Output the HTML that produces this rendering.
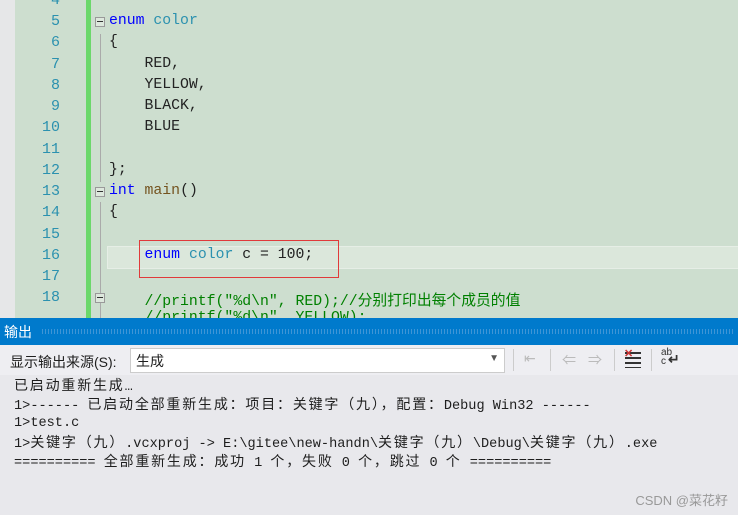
<!DOCTYPE html>
<html><head><meta charset="utf-8"><style>
body{margin:0;width:738px;height:515px;overflow:hidden;position:relative;background:#e8e8ec;font-family:"Liberation Mono","Noto Sans CJK SC",monospace}
.ed{position:absolute;left:0;top:0;width:738px;height:318px;background:#cddecf}
.gut{position:absolute;left:0;top:0;width:15px;height:318px;background:#e6e7e8}
.ln{position:absolute;left:20px;width:40px;text-align:right;color:#2b91af;font-size:15px}
.code{position:absolute;left:109px;font-size:14.8px;color:#222;white-space:pre}
.g{position:absolute;left:86px;top:0;width:5px;height:318px;background:#6bd86b}
.kw{color:#0000ff}.ty{color:#2b91af}.fn{color:#74531f}.cm{color:#008000}
.fold{position:absolute;left:95px;width:8px;height:8px;border:1px solid #999;background:#dde8dd}
.fold:after{content:"";position:absolute;left:1px;top:3px;width:6px;height:1px;background:#333}
.vl{position:absolute;left:100px;width:1px;background:#aaa}
.title{position:absolute;left:0;top:318px;width:738px;height:27px;background:#007acc;color:#fff;font-family:"Liberation Sans","Noto Sans CJK SC",sans-serif;font-size:14px}
.tb{position:absolute;left:0;top:345px;width:738px;height:30px;background:#eeeef2;font-family:"Liberation Sans","Noto Sans CJK SC",sans-serif;font-size:14px;color:#1e1e1e}
.out{position:absolute;left:14px;font-size:13.6px;line-height:19px;height:19px;color:#1e1e1e;white-space:pre}
.c{font-family:"Noto Sans CJK SC",sans-serif;font-size:14px;letter-spacing:1.8px}
</style></head><body>
<div class="ed">
<div class="gut"></div>
<div class="g"></div>
<div style="position:absolute;left:107px;top:246px;width:631px;height:21px;background:#dbe7db;border:1px solid #e6eee6"></div>
<div style="position:absolute;left:139px;top:240px;width:198px;height:36px;border:1px solid #e03a3a"></div>
<div class="vl" style="top:34px;height:148px"></div>
<div class="vl" style="top:202px;height:116px"></div>
<div class="fold" style="top:17px"></div>
<div class="fold" style="top:187px"></div>
<div class="fold" style="top:293px"></div>
<div class="ln" style="top:-8px">4</div>
<div class="ln" style="top:13px">5</div><div class="code" style="top:13px"><span class="kw">enum</span> <span class="ty">color</span></div>
<div class="ln" style="top:34px">6</div><div class="code" style="top:34px">{</div>
<div class="ln" style="top:56px">7</div><div class="code" style="top:56px">    RED,</div>
<div class="ln" style="top:77px">8</div><div class="code" style="top:77px">    YELLOW,</div>
<div class="ln" style="top:98px">9</div><div class="code" style="top:98px">    BLACK,</div>
<div class="ln" style="top:119px">10</div><div class="code" style="top:119px">    BLUE</div>
<div class="ln" style="top:141px">11</div>
<div class="ln" style="top:162px">12</div><div class="code" style="top:162px">};</div>
<div class="ln" style="top:183px">13</div><div class="code" style="top:183px"><span class="kw">int</span> <span class="fn">main</span>()</div>
<div class="ln" style="top:204px">14</div><div class="code" style="top:204px">{</div>
<div class="ln" style="top:226px">15</div>
<div class="ln" style="top:247px">16</div><div class="code" style="top:247px">    <span class="kw">enum</span> <span class="ty">color</span> c = 100;</div>
<div class="ln" style="top:268px">17</div>
<div class="ln" style="top:289px">18</div><div class="code cm" style="top:289px">    //printf("%d\n", RED);//分别打印出每个成员的值</div>
<div class="code cm" style="top:310px">    //printf("%d\n", YELLOW);</div>
</div>
<div class="title"><span style="position:absolute;left:4px;top:4px">输出</span>
<div style="position:absolute;left:42px;top:11px;width:692px;height:5px;background:repeating-linear-gradient(90deg,#3f95d6 0 1px,transparent 1px 3px)"></div></div>
<div class="tb">
<span style="position:absolute;left:10px;top:7px">显示输出来源(S):</span>
<div style="position:absolute;left:130px;top:3px;width:373px;height:23px;background:#fff;border:1px solid #ccc"><span style="position:absolute;left:5px;top:2px">生成</span><span style="position:absolute;right:5px;top:4px;font-size:10px;color:#555">▼</span></div>
<div style="position:absolute;left:513px;top:4px;width:1px;height:22px;background:#ccc"></div>
<div style="position:absolute;left:550px;top:4px;width:1px;height:22px;background:#ccc"></div>
<div style="position:absolute;left:614px;top:4px;width:1px;height:22px;background:#ccc"></div>
<div style="position:absolute;left:651px;top:4px;width:1px;height:22px;background:#ccc"></div>
<span style="position:absolute;left:524px;top:5px;color:#bbb;font-size:14px">⇤</span>
<span style="position:absolute;left:562px;top:5px;color:#bbb;font-size:14px">⇐</span>
<span style="position:absolute;left:588px;top:5px;color:#bbb;font-size:14px">⇒</span>
<div style="position:absolute;left:625px;top:7px;width:16px;height:16px;background:repeating-linear-gradient(180deg,#333 0 2px,transparent 2px 5px)"></div>
<span style="position:absolute;left:624px;top:2px;color:#c33;font-size:11px;font-weight:bold">✕</span>
<span style="position:absolute;left:661px;top:3px;font-size:10px;line-height:9px;color:#333">ab<br>c</span><span style="position:absolute;left:668px;top:6px;font-size:14px;font-weight:bold;color:#333">↵</span>
</div>
<div class="out" style="top:376px"><span class="c">已启动重新生成</span>…</div>
<div class="out" style="top:395px">1&gt;------ <span class="c">已启动全部重新生成：项目：关键字（九），配置：</span>Debug Win32 ------</div>
<div class="out" style="top:414px">1&gt;test.c</div>
<div class="out" style="top:433px">1&gt;<span class="c">关键字（九）</span>.vcxproj -&gt; E:\gitee\new-handn\<span class="c">关键字（九）</span>\Debug\<span class="c">关键字（九）</span>.exe</div>
<div class="out" style="top:452px">========== <span class="c">全部重新生成：成功</span> 1 <span class="c">个，失败</span> 0 <span class="c">个，跳过</span> 0 <span class="c">个</span> ==========</div>
<div style="position:absolute;right:10px;top:490px;font-family:'Liberation Sans','Noto Sans CJK SC',sans-serif;font-size:13px;color:#999">CSDN @菜花籽</div>
</body></html>
